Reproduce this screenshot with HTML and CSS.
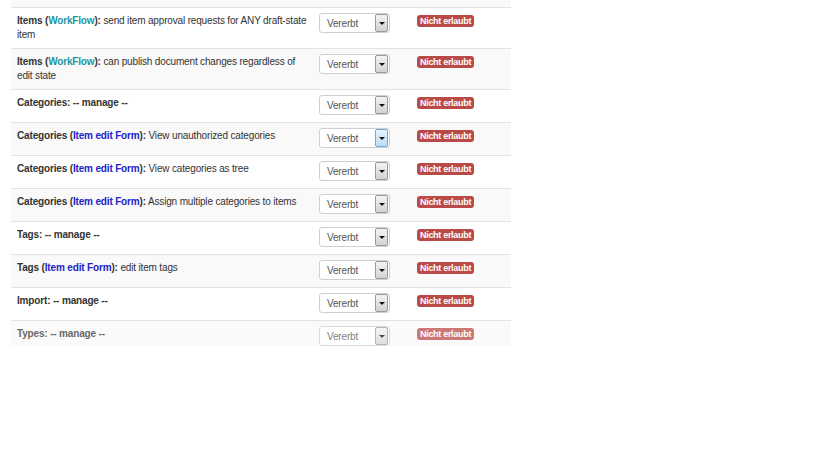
FILE: index.html
```html
<!DOCTYPE html>
<html lang="en">
<head>
  <meta charset="UTF-8">
  <title>Rechte</title>
  <link rel="stylesheet" href="styles.css">
</head>
<body>

<div class="rights">
  <div class="rights-top"></div>
  <table class="rights-table">
    <tr>
      <td class="perm"><b>Items (<span class="wf">WorkFlow</span>):</b> send item approval requests for ANY draft-state item</td>
      <td class="val"><div class="pick"><span>Vererbt</span><i class="pick-btn"></i></div></td>
      <td class="res"><span class="badge">Nicht erlaubt</span></td>
    </tr>
    <tr>
      <td class="perm"><b>Items (<span class="wf">WorkFlow</span>):</b> can publish document changes regardless of edit state</td>
      <td class="val"><div class="pick"><span>Vererbt</span><i class="pick-btn"></i></div></td>
      <td class="res"><span class="badge">Nicht erlaubt</span></td>
    </tr>
    <tr>
      <td class="perm"><b>Categories: -- manage --</b></td>
      <td class="val"><div class="pick"><span>Vererbt</span><i class="pick-btn"></i></div></td>
      <td class="res"><span class="badge">Nicht erlaubt</span></td>
    </tr>
    <tr>
      <td class="perm"><b>Categories (<span class="form">Item edit Form</span>):</b> View unauthorized categories</td>
      <td class="val"><div class="pick hover"><span>Vererbt</span><i class="pick-btn"></i></div></td>
      <td class="res"><span class="badge">Nicht erlaubt</span></td>
    </tr>
    <tr>
      <td class="perm"><b>Categories (<span class="form">Item edit Form</span>):</b> View categories as tree</td>
      <td class="val"><div class="pick"><span>Vererbt</span><i class="pick-btn"></i></div></td>
      <td class="res"><span class="badge">Nicht erlaubt</span></td>
    </tr>
    <tr>
      <td class="perm"><b>Categories (<span class="form">Item edit Form</span>):</b> Assign multiple categories to items</td>
      <td class="val"><div class="pick"><span>Vererbt</span><i class="pick-btn"></i></div></td>
      <td class="res"><span class="badge">Nicht erlaubt</span></td>
    </tr>
    <tr>
      <td class="perm"><b>Tags: -- manage --</b></td>
      <td class="val"><div class="pick"><span>Vererbt</span><i class="pick-btn"></i></div></td>
      <td class="res"><span class="badge">Nicht erlaubt</span></td>
    </tr>
    <tr>
      <td class="perm"><b>Tags (<span class="form">Item edit Form</span>):</b> edit item tags</td>
      <td class="val"><div class="pick"><span>Vererbt</span><i class="pick-btn"></i></div></td>
      <td class="res"><span class="badge">Nicht erlaubt</span></td>
    </tr>
    <tr>
      <td class="perm"><b>Import: -- manage --</b></td>
      <td class="val"><div class="pick"><span>Vererbt</span><i class="pick-btn"></i></div></td>
      <td class="res"><span class="badge">Nicht erlaubt</span></td>
    </tr>
    <tr class="faded">
      <td class="perm"><b>Types: -- manage --</b></td>
      <td class="val"><div class="pick"><span>Vererbt</span><i class="pick-btn"></i></div></td>
      <td class="res"><span class="badge">Nicht erlaubt</span></td>
    </tr>
  </table>
</div>

</body>
</html>
```

FILE: styles.css
```css
body {
  margin: 0;
  background: #fff;
  font-family: "Liberation Sans", Arial, sans-serif;
  font-size: 10px;
  letter-spacing: -0.16px;
  color: #333;
}

.rights {
  margin-left: 11px;
  width: 500px;
  height: 346px;
  overflow: hidden;
}

.rights-top {
  height: 7px;
  background: #f9f9f9;
}

.rights-table {
  width: 100%;
  border-collapse: collapse;
}

.rights-table td {
  border-top: 1px solid #e2e2e2;
  padding: 6px;
  vertical-align: top;
  line-height: 14px;
}

.rights-table tr:nth-child(even) td {
  background: #f9f9f9;
}

.perm {
  width: 290px;
}

.perm b {
  color: #333;
}

.wf {
  color: #1f95a0;
}

.form {
  color: #2222c8;
}

.val {
  width: 86px;
}

.pick {
  position: relative;
  width: 69px;
  height: 18px;
  border: 1px solid #cfcfcf;
  border-radius: 3px;
  background: #fff;
  margin: -1px 0 1px;
}

.pick span {
  display: block;
  padding-left: 7px;
  line-height: 20px;
  color: #555;
  font-size: 10px;
}

.pick-btn {
  position: absolute;
  right: 1px;
  top: 0;
  width: 11px;
  height: 16px;
  border: 1px solid #9a9a9a;
  border-radius: 2px;
  background: linear-gradient(#f4f4f4, #d2d2d2);
}

.pick-btn::after {
  content: "";
  position: absolute;
  left: 3px;
  top: 7px;
  border-left: 3px solid transparent;
  border-right: 3px solid transparent;
  border-top: 3px solid #111;
}

.pick.hover .pick-btn {
  border-color: #6fa8dc;
  background: linear-gradient(#e8f4fd, #b9dcf6);
}

.badge {
  display: inline-block;
  background: #b94a48;
  color: #fff;
  font-weight: bold;
  font-size: 9px;
  letter-spacing: -0.3px;
  line-height: 12px;
  padding: 0 3px;
  border-radius: 3px;
}

.faded td {
  opacity: 0.75;
}
```
